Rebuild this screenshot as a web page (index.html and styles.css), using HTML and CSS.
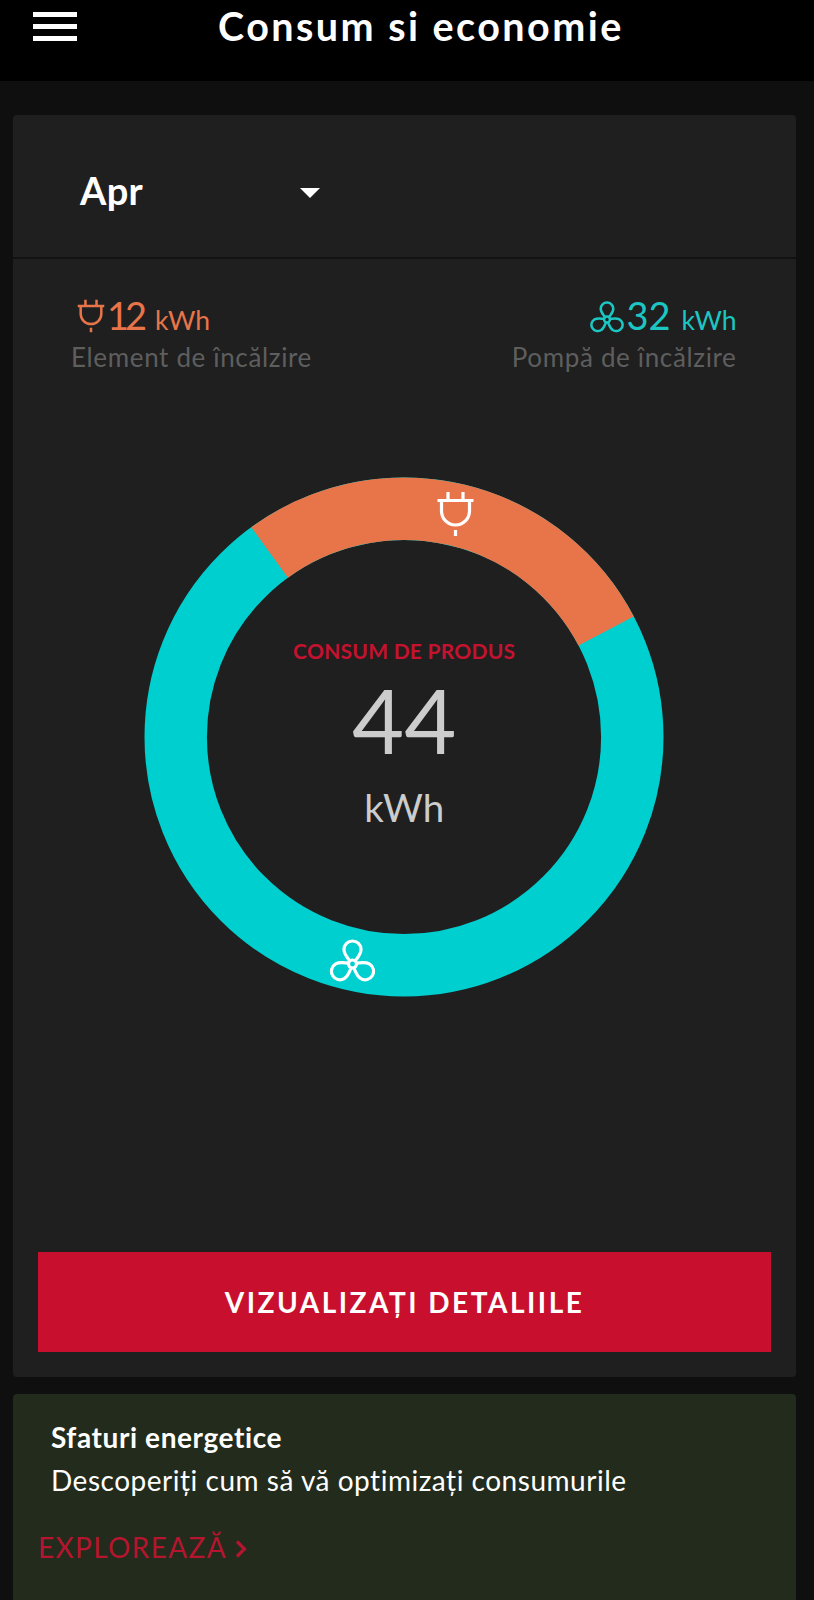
FILE: index.html
```
<!DOCTYPE html>
<html lang="ro">
<head>
  <meta charset="UTF-8">
  <meta name="viewport" content="width=device-width, initial-scale=1.0">
  <title>Consum si economie</title>
  <link rel="stylesheet" href="styles.css">
</head>
<body>
  <!-- shared icons -->
  <svg class="sprite" width="0" height="0">
    <symbol id="plug" viewBox="0 0 38 46">
      <path d="M1 9.5H37M11.5 1V9M26.5 1V9M5 10V20A14 14 0 0 0 33 20V10M19 39V45"/>
    </symbol>
    <symbol id="fan" viewBox="0 0 46 44">
      <circle cx="23" cy="26" r="4"/>
      <path d="M20 22.5C17.5 19 14.5 16 14.5 11.5A8.5 8.5 0 0 1 31.5 11.5C31.5 16 28.5 19 26 22.5"/>
      <path d="M20 22.5C17.5 19 14.5 16 14.5 11.5A8.5 8.5 0 0 1 31.5 11.5C31.5 16 28.5 19 26 22.5" transform="rotate(120 23 26)"/>
      <path d="M20 22.5C17.5 19 14.5 16 14.5 11.5A8.5 8.5 0 0 1 31.5 11.5C31.5 16 28.5 19 26 22.5" transform="rotate(240 23 26)"/>
    </symbol>
  </svg>

  <header class="topbar">
    <div class="menu"><span></span><span></span><span></span></div>
    <h1>Consum si economie</h1>
  </header>

  <main>
    <section class="card">
      <div class="month">
        <span class="month-name">Apr</span>
        <span class="caret"></span>
      </div>

      <div class="stats">
        <div class="stat heater">
          <div class="value"><svg class="icon-plug"><use href="#plug"/></svg><span class="num">12</span><span class="unit">kWh</span></div>
          <div class="label">Element de încălzire</div>
        </div>
        <div class="stat pump">
          <div class="value"><svg class="icon-fan"><use href="#fan"/></svg><span class="num">32</span><span class="unit">kWh</span></div>
          <div class="label">Pompă de încălzire</div>
        </div>
      </div>

      <div class="chart">
        <svg class="donut" viewBox="-260 -260 520 520">
          <circle class="ring-pump" r="228.3"/>
          <path class="ring-heater" d="M-134.4 -184.5A228.3 228.3 0 0 1 202.1 -106.1"/>
          <use class="ring-icon" href="#plug" x="32.5" y="-246" width="38" height="46"/>
          <use class="ring-icon" href="#fan" x="-74.5" y="201" width="46" height="44"/>
        </svg>
        <div class="total">
          <div class="total-label">CONSUM DE PRODUS</div>
          <div class="total-num">44</div>
          <div class="total-unit">kWh</div>
        </div>
      </div>

      <button class="details">VIZUALIZAȚI DETALIILE</button>
    </section>

    <section class="card tips">
      <h2>Sfaturi energetice</h2>
      <p>Descoperiți cum să vă optimizați consumurile</p>
      <a class="explore"><span>EXPLOREAZĂ</span><svg width="12" height="18" viewBox="0 0 12 18"><path d="M2 1.5L9.5 9L2 16.5"/></svg></a>
    </section>
  </main>
</body>
</html>
```
FILE: styles.css
```
* {
  box-sizing: border-box;
}

body {
  margin: 0;
  height: 1600px;
  overflow: hidden;
  background-color: #0f0f0f;
  color: #fff;
  font-family: Lato, "Open Sans", sans-serif;
  font-variant-ligatures: none;
}

h1, h2, p {
  margin: 0;
}

svg {
  fill: none;
  stroke: currentColor;
  display: block;
}

.sprite {
  display: none;
}

.topbar {
  display: flex;
  align-items: flex-start;
  height: 81px;
  padding-left: 33px;
  background-color: #000;
}

.menu {
  display: grid;
  gap: 7px;
  width: 44px;
  margin-top: 12px;
}

.menu span {
  height: 5px;
  background-color: #fff;
}

.topbar h1 {
  margin-left: 141px;
  font-size: 39.5px;
  font-weight: 700;
  line-height: 52px;
  letter-spacing: 2.45px;
  white-space: nowrap;
}

main {
  display: flex;
  flex-direction: column;
  gap: 17px;
  padding: 34px 18.5px 0 13px;
}

.card {
  background-color: #1f1f1f;
  border-radius: 4px;
}

.month {
  display: flex;
  align-items: center;
  justify-content: space-between;
  height: 144px;
  width: 100%;
  padding: 12px 476px 0 67px;
  border-bottom: 2px solid #121212;
}

.month-name {
  margin-bottom: 3px;
  font-size: 38px;
  font-weight: 700;
  line-height: 35px;
  letter-spacing: 0.3px;
}

.caret {
  margin-top: 2px;
  border: 10.5px solid transparent;
  border-top-color: #fff;
  border-bottom: 0;
}

.stats {
  display: flex;
  justify-content: space-between;
  padding: 34px 59px 0 58px;
}

.value {
  display: flex;
  align-items: baseline;
  height: 44px;
  line-height: 44px;
}

.num {
  font-size: 38px;
}

.unit {
  margin-left: 10px;
  font-size: 26.5px;
}

.label {
  margin-top: 3px;
  color: #5e5e5e;
  font-size: 26px;
  line-height: 34px;
  letter-spacing: 0.65px;
  white-space: nowrap;
}

.heater .value {
  padding-left: 6px;
  color: #e8754a;
}

.heater .num {
  margin-left: -1px;
  letter-spacing: -4px;
}

.heater .unit {
  margin-left: 12px;
}

.pump .value {
  justify-content: flex-end;
  color: #1cc6c3;
}

.pump .unit {
  margin-left: 11px;
}

.icon-plug {
  align-self: center;
  width: 28px;
  height: 34px;
  margin: 2px 3px 0 0;
  stroke-width: 3.4;
}

.icon-fan {
  align-self: center;
  width: 34px;
  height: 33px;
  margin: 2px 2px 0 0;
  stroke-width: 3.4;
}

.chart {
  display: grid;
  justify-content: center;
  margin-top: 103px;
}

.chart > * {
  grid-area: 1 / 1;
}

.donut {
  width: 520px;
  height: 520px;
  stroke-width: 62.4;
}

.ring-pump {
  stroke: #00cfcf;
}

.ring-heater {
  stroke: #e8754a;
}

.ring-icon {
  stroke: #fff;
  stroke-width: 3.2;
}

.total {
  padding-top: 161px;
  color: #ccc;
  text-align: center;
}

.total-label {
  color: #c4122f;
  font-size: 21px;
  font-weight: bold;
  line-height: 26px;
  letter-spacing: 0.25px;
}

.total-num {
  margin-top: 10px;
  font-size: 90px;
  line-height: 90px;
}

.total-unit {
  margin-top: 20px;
  font-size: 38.5px;
  line-height: 46px;
}

.details {
  display: block;
  width: 733px;
  height: 100px;
  margin: 255px 25px 0;
  padding-bottom: 2px;
  border: none;
  background-color: #c8102e;
  color: #fff;
  font-family: inherit;
  font-size: 28px;
  font-weight: bold;
  letter-spacing: 2.5px;
}

.card:first-child {
  padding-bottom: 25px;
}

.tips {
  height: 240px;
  padding: 26px 25px 0;
  background-color: #232b1c;
}

.tips h2, .tips p {
  padding-left: 13px;
  font-size: 28px;
  line-height: 34px;
  white-space: nowrap;
}

.tips h2 {
  letter-spacing: 0.6px;
}

.tips p {
  margin-top: 9px;
  letter-spacing: 0.52px;
}

.explore {
  display: flex;
  align-items: center;
  gap: 8px;
  margin-top: 33px;
  color: #b5152e;
  font-size: 28px;
  line-height: 34px;
  letter-spacing: 1.35px;
}

.explore svg {
  margin-top: 3px;
  stroke-width: 3.2;
}
```
